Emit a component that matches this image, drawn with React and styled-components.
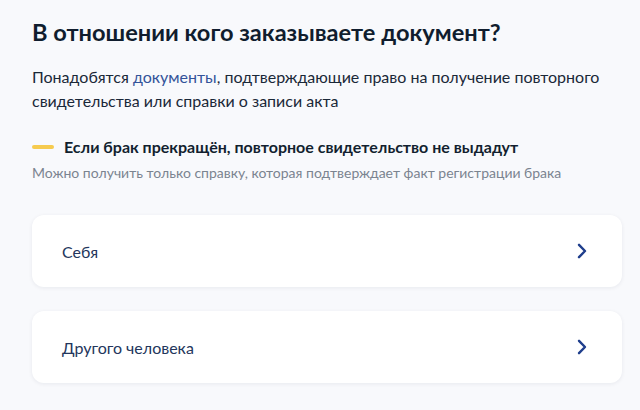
import React from "react";
import styled, { createGlobalStyle } from "styled-components";

const Global = createGlobalStyle`
  html, body { margin: 0; padding: 0; background: #f8f9fc; }
  body { font-family: Lato, "Noto Sans", sans-serif; color: #0b1f33; -webkit-font-smoothing: antialiased; }
`;

const Page = styled.main`
  width: 640px;
  height: 410px;
  box-sizing: border-box;
  padding: 16px 18px 0 32px;
  background: #f8f9fc;
  overflow: hidden;
`;

const Title = styled.h1`
  margin: 0;
  font-size: 23.6px;
  line-height: 32px;
  font-weight: 700;
  color: #101d2e;
`;

const Lead = styled.p`
  margin: 17px 0 0;
  font-size: 16px;
  line-height: 24px;
  color: #1a2838;
`;

const Link = styled.a`
  color: #33539a;
  text-decoration: none;
`;

const Notice = styled.section`
  margin-top: 22px;
`;

const NoticeHead = styled.div`
  display: flex;
  align-items: center;
  gap: 10px;
  font-size: 16px;
  line-height: 24px;
  font-weight: 700;
  color: #121f2f;
`;

const Mark = styled.span`
  width: 22px;
  height: 4px;
  border-radius: 2px;
  background: #f6cb4f;
  flex: none;
`;

const NoticeText = styled.p`
  margin: 4px 0 0;
  font-size: 14px;
  line-height: 20px;
  color: #7b8490;
`;

const Options = styled.div`
  display: flex;
  flex-direction: column;
  gap: 24px;
  margin-top: 32px;
`;

const Option = styled.button`
  display: flex;
  align-items: center;
  justify-content: space-between;
  height: 72px;
  padding: 0 32px 0 30px;
  border: none;
  border-radius: 12px;
  background: #ffffff;
  box-shadow: 0 1px 4px rgba(11, 31, 51, 0.07);
  font-family: inherit;
  font-size: 16px;
  color: #23365c;
  text-align: left;
  cursor: pointer;
`;

const Chevron = () => (
  <svg width="16" height="16" viewBox="0 0 16 16" fill="none">
    <path d="M5 1.8 L11 8 L5 14.2" stroke="#1f3e8c" strokeWidth="2.4" strokeLinecap="round" strokeLinejoin="round" />
  </svg>
);

export default function App() {
  return (
    <Page>
      <Global />
      <Title>В отношении кого заказываете документ?</Title>
      <Lead>
        Понадобятся <Link href="#">документы</Link>, подтверждающие право на получение повторного
        свидетельства или справки о записи акта
      </Lead>
      <Notice>
        <NoticeHead>
          <Mark />
          Если брак прекращён, повторное свидетельство не выдадут
        </NoticeHead>
        <NoticeText>Можно получить только справку, которая подтверждает факт регистрации брака</NoticeText>
      </Notice>
      <Options>
        <Option>
          Себя
          <Chevron />
        </Option>
        <Option>
          Другого человека
          <Chevron />
        </Option>
      </Options>
    </Page>
  );
}
